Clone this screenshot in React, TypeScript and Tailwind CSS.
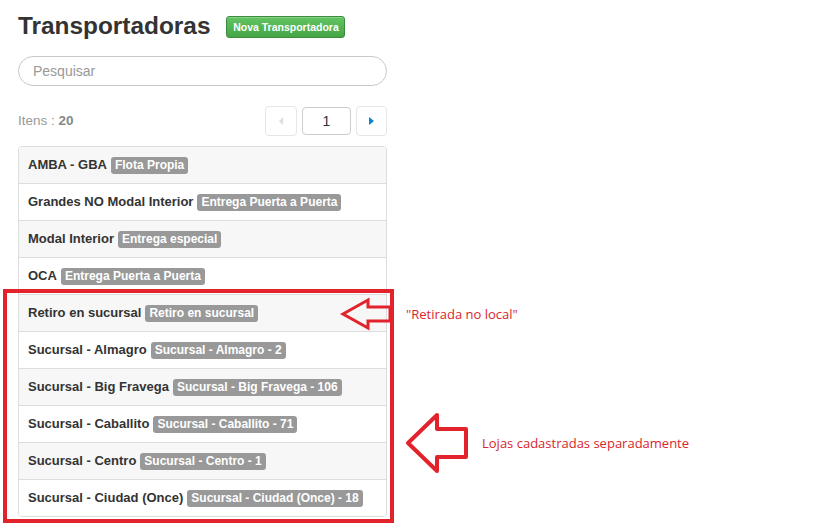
import { useState } from "react";

type Carrier = { name: string; tag: string };

const carriers: Carrier[] = [
  { name: "AMBA - GBA", tag: "Flota Propia" },
  { name: "Grandes NO Modal Interior", tag: "Entrega Puerta a Puerta" },
  { name: "Modal Interior", tag: "Entrega especial" },
  { name: "OCA", tag: "Entrega Puerta a Puerta" },
  { name: "Retiro en sucursal", tag: "Retiro en sucursal" },
  { name: "Sucursal - Almagro", tag: "Sucursal - Almagro - 2" },
  { name: "Sucursal - Big Fravega", tag: "Sucursal - Big Fravega - 106" },
  { name: "Sucursal - Caballito", tag: "Sucursal - Caballito - 71" },
  { name: "Sucursal - Centro", tag: "Sucursal - Centro - 1" },
  { name: "Sucursal - Ciudad (Once)", tag: "Sucursal - Ciudad (Once) - 18" },
];

const App = () => {
  const [query, setQuery] = useState("");

  return (
    <div className="relative w-[819px] h-[531px] overflow-hidden bg-white font-['Liberation_Sans',Arial,sans-serif] text-[#333]">
      <div className="w-[369px] ml-[18px] pt-[10px]">
        {/* header */}
        <div className="flex items-center h-[32px]">
          <h1 className="text-[24.4px] leading-[32px] font-bold text-[#333]">
            Transportadoras
          </h1>
          <button className="ml-[16px] mt-[2px] w-[119px] h-[22px] flex items-center justify-center rounded-[3px] border border-[#3d8b3d] bg-gradient-to-b from-[#62c462] to-[#46a546] text-white text-[10.5px] font-bold leading-none shadow-[inset_0_1px_0_rgba(255,255,255,0.25)]">
            Nova Transportadora
          </button>
        </div>

        {/* search */}
        <input
          value={query}
          onChange={(e) => setQuery(e.target.value)}
          placeholder="Pesquisar"
          className="mt-[14px] w-full h-[30px] rounded-full border border-[#c8c8c8] px-[14px] text-[14px] text-[#555] placeholder:text-[#999] outline-none"
        />

        {/* count + pagination */}
        <div className="mt-[20px] flex items-center justify-between h-[30px]">
          <span className="text-[13.5px] text-[#999] mt-[1px]">
            Itens : <b className="text-[#888]">20</b>
          </span>
          <div className="flex items-center gap-[5px]">
            <button className="w-[32px] h-[30px] rounded-[4px] border border-[#e6e6e6] bg-white flex items-center justify-center">
              <span className="w-0 h-0 border-y-[4px] border-y-transparent border-r-[4px] border-r-[#ddd]" />
            </button>
            <div className="w-[49px] h-[28px] rounded-[4px] border border-[#ccc] flex items-center justify-center text-[14px] text-[#333]">
              1
            </div>
            <button className="w-[31px] h-[30px] rounded-[4px] border border-[#e6e6e6] bg-white flex items-center justify-center">
              <span className="w-0 h-0 border-y-[4px] border-y-transparent border-l-[5px] border-l-[#0088cc]" />
            </button>
          </div>
        </div>

        {/* list */}
        <ul className="mt-[10px] border border-[#ddd] rounded-[4px] overflow-hidden">
          {carriers.map((c, i) => (
            <li
              key={c.name}
              className={`flex items-center gap-[4px] px-[9px] border-[#ddd] ${
                i > 0 ? "border-t h-[37px]" : "h-[36px]"
              } ${i % 2 === 0 ? "bg-[#f7f7f7]" : "bg-white"}`}
            >
              <span className="text-[13px] font-bold text-[#333] whitespace-nowrap">
                {c.name}
              </span>
              <span className="h-[17px] px-[4px] rounded-[3px] bg-[#999] text-white text-[12px] font-bold leading-[17px] whitespace-nowrap">
                {c.tag}
              </span>
            </li>
          ))}
        </ul>
      </div>

      {/* annotations */}
      <div className="absolute left-[3px] top-[289px] w-[391px] h-[234px] border-[4px] border-[#e3232b]" />
      <svg
        className="absolute left-0 top-0 pointer-events-none"
        width="819"
        height="531"
        viewBox="0 0 819 531"
      >
        <polygon
          points="343,314 368,300 368,307 390,307 390,321 368,321 368,328"
          fill="none"
          stroke="#e3232b"
          strokeWidth="3"
          strokeLinejoin="miter"
        />
        <polygon
          points="408,443 437,415 437,429 466,429 466,457 437,457 437,471"
          fill="none"
          stroke="#e3232b"
          strokeWidth="4"
          strokeLinejoin="round"
        />
      </svg>
      <span className="absolute left-[406px] top-[305px] text-[13px] leading-[18px] text-[#d9262c] font-['Open_Sans',sans-serif] whitespace-nowrap">
        "Retirada no local"
      </span>
      <span className="absolute left-[482px] top-[434px] text-[13px] leading-[18px] text-[#d9262c] font-['Open_Sans',sans-serif] whitespace-nowrap">
        Lojas cadastradas separadamente
      </span>
    </div>
  );
};

export default App;
